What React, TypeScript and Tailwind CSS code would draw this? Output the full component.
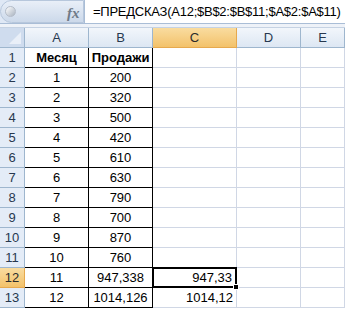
const cols = ['A', 'B', 'C', 'D', 'E'];

const data: [string, string, string][] = [
  ['Месяц', 'Продажи', ''],
  ['1', '200', ''],
  ['2', '320', ''],
  ['3', '500', ''],
  ['4', '420', ''],
  ['5', '610', ''],
  ['6', '630', ''],
  ['7', '790', ''],
  ['8', '700', ''],
  ['9', '870', ''],
  ['10', '760', ''],
  ['11', '947,338', '947,33'],
  ['12', '1014,126', '1014,12'],
];

const FormulaBar = () => (
  <div className="flex h-[24px] bg-[#dfe8f5] border-b border-[#a9bdd6]">
    <div className="relative w-[84px] h-full rounded-l-full bg-gradient-to-b from-[#e9eff8] to-[#ccd9ea] border border-[#b7c7dc]">
      <div className="absolute left-[4px] top-[5px] w-[11px] h-[11px] rounded-full bg-gradient-to-br from-white to-[#aab4c1] border border-[#b4bcc8]" />
      <span className="absolute left-[66px] top-[1px] text-[15px] italic font-bold text-[#6f7a88] font-['Liberation_Serif']">
        fx
      </span>
    </div>
    <div className="flex-1 bg-white border-l border-[#a9bdd6] pl-[8px] text-[13px] leading-[23px] tracking-[-0.25px] whitespace-nowrap overflow-hidden">
      =ПРЕДСКАЗ(A12;$B$2:$B$11;$A$2:$A$11)
    </div>
  </div>
);

export default function App() {
  return (
    <div className="w-[345px] h-[309px] overflow-hidden bg-white font-['Liberation_Sans',sans-serif] text-black">
      <FormulaBar />
      <div className="h-[4px] bg-[#eef2f8] border-b border-[#c5d2e3]" />
      <div className="grid grid-cols-[25px_64px_64px_84px_64px_1fr] grid-rows-[20px_repeat(13,20px)] text-[13px]">
        {/* header row */}
        <div className="relative bg-[#cfdcee] border-r border-b border-[#9eb6ce]">
          <div className="absolute right-[3px] bottom-[3px] w-0 h-0 border-l-[12px] border-l-transparent border-b-[12px] border-b-[#e9eff8]" />
        </div>
        {cols.map((c) => (
          <div
            key={c}
            className={
              c === 'C'
                ? 'flex items-center justify-center bg-gradient-to-b from-[#f9dc9f] to-[#f3c26a] border-r border-b border-[#e6a94e] text-[#2b2b2b]'
                : 'flex items-center justify-center bg-gradient-to-b from-[#f2f6fb] to-[#dde7f3] border-r border-b border-[#9eb6ce] text-[#27384f]'
            }
          >
            {c}
          </div>
        ))}
        {data.map(([a, b, c], i) => {
          const row = i + 1;
          const selected = row === 12;
          return [
            <div
              key={`h${row}`}
              className={
                selected
                  ? 'flex items-center justify-center bg-gradient-to-b from-[#f9dc9f] to-[#f3c26a] border-r border-b border-[#e6a94e] text-[#2b2b2b]'
                  : 'flex items-center justify-center bg-[#e4ecf7] border-r border-b border-[#9eb6ce] text-[#27384f]'
              }
            >
              {row}
            </div>,
            <div
              key={`a${row}`}
              className={`flex items-center justify-center border-r border-b border-black ${row === 1 ? 'font-bold' : ''}`}
            >
              {a}
            </div>,
            <div
              key={`b${row}`}
              className={`flex items-center justify-center border-r border-b border-black ${row === 1 ? 'font-bold' : ''}`}
            >
              {b}
            </div>,
            <div
              key={`c${row}`}
              className={
                selected
                  ? 'relative flex items-center justify-end pr-[3px] -ml-px -mt-px border-2 border-black'
                  : 'flex items-center justify-end pr-[3px] border-r border-b border-[#d0d7e5]'
              }
            >
              {c}
              {selected && (
                <div className="absolute -right-[4px] -bottom-[4px] w-[6px] h-[6px] bg-black border border-white" />
              )}
            </div>,
            <div key={`d${row}`} className="border-r border-b border-[#d0d7e5]" />,
            <div key={`e${row}`} className="border-r border-b border-[#d0d7e5]" />,
          ];
        })}
      </div>
    </div>
  );
}
